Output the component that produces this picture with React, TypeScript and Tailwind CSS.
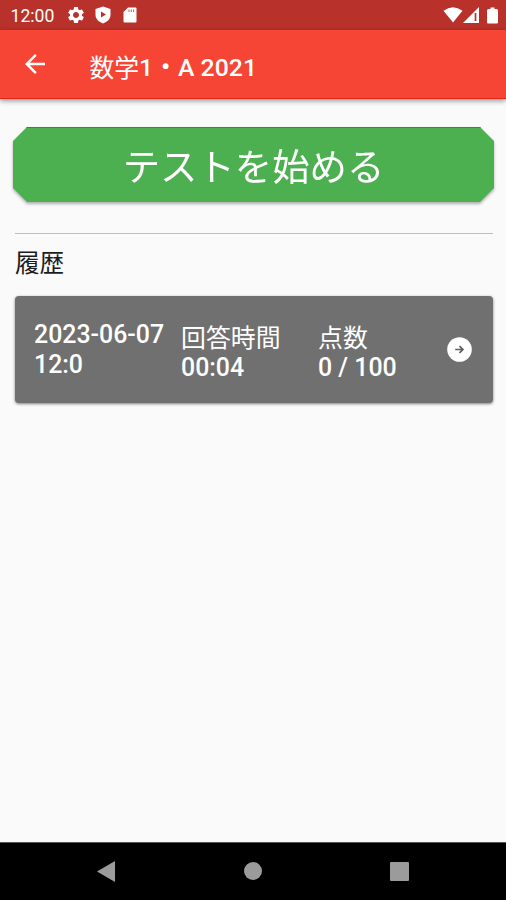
import React from "react";
import { MdArrowBack, MdSettings } from "react-icons/md";

interface HistoryItem {
  date: string;
  time: string;
  duration: string;
  score: string;
}

const historyItems: HistoryItem[] = [
  { date: "2023-06-07", time: "12:0", duration: "00:04", score: "0 / 100" },
];

function StatusBar() {
  return (
    <div className="flex h-[30px] items-center bg-[#b8312a] pl-[10.5px] pr-[8px] text-white">
      <span className="w-[55.5px] pt-[3px] text-[17.6px] leading-none">12:00</span>
      <MdSettings className="size-[20px]" />
      {/* Play Protect shield */}
      <svg viewBox="0 0 16 18" className="ml-[9px] h-[18px] w-[16px]">
        <path d="M8 0.5 15.5 3v6c0 4-3.5 7-7.5 8.5C4 16 0.5 13 0.5 9V3Z" fill="#fff" />
        <path d="M6 5.5v6l5-3Z" fill="#b8312a" />
      </svg>
      {/* SD card */}
      <svg viewBox="0 0 14 16" className="ml-[12px] h-4 w-[14px]">
        <path d="M5 0.5h7.5q1 0 1 1v13q0 1-1 1h-11q-1 0-1-1V5Z" fill="#fff" />
        <path d="M6 2.5v2.5M8.3 2.5v2.5M10.6 2.5v2.5" stroke="#b8312a" strokeWidth="0.8" />
      </svg>
      <svg viewBox="0 0 20 16" className="ml-auto h-4 w-5">
        <path d="M0.5 3.8Q10-3.4 19.5 3.8L10 15.5Z" fill="#fff" />
      </svg>
      <svg viewBox="0 0 16 16" className="h-4 w-4">
        <path d="M0 16 16 0v16Z" fill="#fff" />
        <path d="M12.5 6v8" stroke="#b8312a" strokeWidth="1.7" />
      </svg>
      <svg viewBox="0 0 11 17" className="ml-[8px] h-[17px] w-[11px]">
        <path d="M3.5 0.5h4V2H9.5q1.5 0 1.5 1.5v12q0 1-1 1H1q-1 0-1-1v-12Q0 2 1.5 2h2Z" fill="#fff" />
      </svg>
    </div>
  );
}

function AppBar() {
  return (
    <header className="relative flex h-[69px] items-center border-b border-[#e5261b] bg-[#f64435] pl-5 text-white shadow-[0_2px_5px_rgba(0,0,0,0.4)]">
      <MdArrowBack className="size-[30px]" />
      <h1 className="ml-[39.5px] mt-[7px] whitespace-pre text-[24.8px] font-medium leading-[30px]">
        <span className="relative top-px font-normal">数学</span>1・A 2021
      </h1>
    </header>
  );
}

function StartButton() {
  return (
    <button className="mx-[13px] mt-7 block drop-shadow-[0_2px_1.5px_rgba(0,0,0,0.3)]">
      <span className="flex h-[75px] w-[481px] items-center justify-center border-t border-[#17a01c] bg-[#4caf50] pt-[8px] text-[37.4px] leading-none text-white [clip-path:polygon(14px_0,467px_0,100%_14px,100%_61px,467px_100%,14px_100%,0_61px,0_14px)]">
        テストを始める
      </span>
    </button>
  );
}

function HistoryCard({ item }: { item: HistoryItem }) {
  return (
    <div className="ml-[15px] mr-[13px] mt-[17px] flex h-[107px] items-center rounded bg-[#707070] pl-[19px] pr-[21px] text-[24.9px] font-medium leading-[30px] text-white shadow-[0_1px_3px_rgba(0,0,0,0.5)]">
      <div className="w-[147px]">
        <p>{item.date}</p>
        <p>{item.time}</p>
      </div>
      <div className="mt-[6px] w-[137px]">
        <p className="relative top-px font-normal">回答時間</p>
        <p>{item.duration}</p>
      </div>
      <div className="mt-[6px]">
        <p className="relative top-px font-normal">点数</p>
        <p>{item.score}</p>
      </div>
      <svg viewBox="0 0 25 25" className="ml-auto size-[25px]">
        <circle cx="12.5" cy="12.5" r="12.3" fill="#fff" />
        <path d="M8.2 12.5h7.6M12.5 9.1l3.4 3.4-3.4 3.4" fill="none" stroke="#5f5f5f" strokeWidth="1.7" />
      </svg>
    </div>
  );
}

function NavigationBar() {
  return (
    <nav className="flex h-[58px] items-center justify-between border-t border-[#555] bg-black px-[97px] pb-px">
      <svg viewBox="0 0 18 21" className="h-[21px] w-[18px]">
        <path d="M0 10.5 18 0v21Z" fill="#9b9b9b" />
      </svg>
      <span className="ml-px size-[18px] rounded-full bg-[#9b9b9b]" />
      <span className="size-[19px] rounded-[1px] bg-[#9b9b9b]" />
    </nav>
  );
}

export default function App() {
  return (
    <div className="flex h-[900px] w-[506px] flex-col overflow-hidden bg-[#fafafa] font-[Roboto,'Noto_Sans_CJK_JP',sans-serif]">
      <StatusBar />
      <AppBar />
      <main className="flex-1">
        <StartButton />
        <div className="ml-[15px] mr-[13px] mt-[31px] h-px bg-[#bdbdbd]" />
        <h2 className="ml-[15px] mt-[15px] text-[24.6px] leading-[30px] text-[#1c1c1c]">履歴</h2>
        {historyItems.map((item) => (
          <HistoryCard key={item.date} item={item} />
        ))}
      </main>
      <NavigationBar />
    </div>
  );
}
